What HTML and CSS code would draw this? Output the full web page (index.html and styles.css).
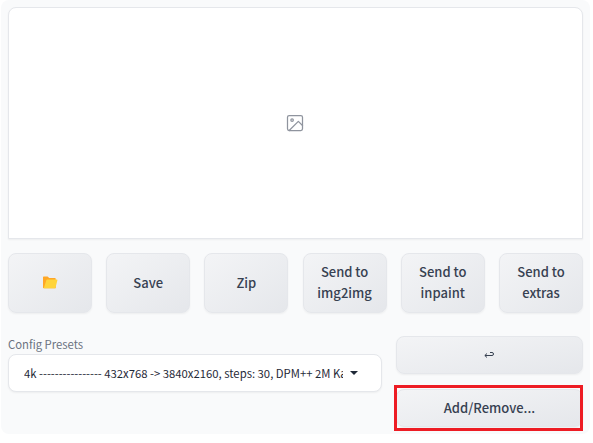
FILE: index.html
```html
<!DOCTYPE html>
<html lang="en">
<head>
    <meta charset="UTF-8">
    <meta name="viewport" content="width=device-width, initial-scale=1.0">
    <title>Config Presets</title>
    <link rel="stylesheet" href="styles.css">
</head>
<body>
<div class="panel">
    <div class="gallery">
        <svg class="image-icon" viewBox="0 0 24 24" fill="none" stroke="currentColor" stroke-width="1.5" stroke-linecap="round" stroke-linejoin="round">
            <rect x="3" y="3" width="18" height="18" rx="2" ry="2"/>
            <circle cx="8.5" cy="8.5" r="1.5"/>
            <polyline points="21 15 16 10 5 21"/>
        </svg>
    </div>

    <div class="actions">
        <button class="btn">
            <svg class="folder-icon" viewBox="0 0 15 13">
                <path d="M0 1.2Q0 .5.7.5H4.6L6.2 2H12Q12.7 2 12.7 2.8V12.2H.7Q0 12.2 0 11.5Z" fill="#ffa726"/>
                <path d="M3.3 4.2Q3.5 3.6 4.1 3.6H13.9Q14.6 3.6 14.4 4.3L12.6 11.6Q12.4 12.2 11.8 12.2H.8Z" fill="#ffd43b"/>
            </svg>
        </button>
        <button class="btn">Save</button>
        <button class="btn">Zip</button>
        <button class="btn">Send to<br>img2img</button>
        <button class="btn">Send to<br>inpaint</button>
        <button class="btn">Send to<br>extras</button>
    </div>

    <div class="presets">
        <div class="field">
            <div class="label">Config Presets</div>
            <div class="select">
                <span class="value">4k ---------------- 432x768 -&gt; 3840x2160, steps: 30, DPM++ 2M Kar</span>
                <svg class="arrow" viewBox="0 0 8 4"><path d="M0 0H8L4 4Z" fill="#1f2937"/></svg>
            </div>
        </div>
        <div class="side">
            <button class="btn">
                <svg class="return-icon" viewBox="0 0 10 6" fill="none" stroke="#374151" stroke-width="1">
                    <path d="M3 1.5L.8 3.5L3 5.5M1 3.5H8Q9.5 3.5 9.5 2T8 .5H6"/>
                </svg>
            </button>
            <div class="marked">
                <button class="btn">Add/Remove...</button>
            </div>
        </div>
    </div>
</div>
</body>
</html>
```
FILE: styles.css
```css
* {
    margin: 0;
    padding: 0;
    box-sizing: border-box;
    font-family: "Noto Sans CJK SC", "Noto Sans", sans-serif;
}

body {
    background-color: white;
}

.panel {
    width: 589px;
    height: 434px;
    margin-left: 1px;
    padding: 7px 7px 0;
    background-color: #f9fafb;
    border-radius: 8px;
}

.gallery {
    display: flex;
    justify-content: center;
    align-items: center;
    height: 232px;
    padding-right: 1px;
    background-color: white;
    border: 1px solid #e5e7eb;
    border-radius: 8px 8px 0 0;
    box-shadow: 0 1px 2px rgba(0, 0, 0, 0.05);
}

.image-icon {
    width: 20px;
    height: 20px;
    color: #8f949e;
}

.actions {
    display: grid;
    grid-template-columns: repeat(6, 1fr);
    gap: 14.2px;
    margin-top: 14px;
}

.actions .btn {
    height: 60px;
}

.btn {
    display: flex;
    justify-content: center;
    align-items: center;
    padding-bottom: 2px;
    border: 1px solid #e5e7eb;
    border-radius: 8px;
    background: linear-gradient(to bottom right, #f3f4f6, #e5e7eb);
    box-shadow: 0 1px 2px rgba(0, 0, 0, 0.05);
    color: #374151;
    font-size: 13px;
    font-weight: 500;
    line-height: 21px;
    text-align: center;
}

.folder-icon {
    width: 15px;
    height: 13px;
}

.presets {
    display: flex;
    gap: 14px;
    margin-top: 23px;
}

.field {
    width: 374px;
}

.label {
    height: 18px;
    color: #6b7280;
    font-size: 11.3px;
    line-height: 17px;
}

.select {
    display: flex;
    align-items: center;
    height: 38px;
    padding-left: 15px;
    background-color: white;
    border: 1px solid #e5e7eb;
    border-radius: 8px;
    box-shadow: 0 1px 2px rgba(0, 0, 0, 0.05);
}

.value {
    width: 319px;
    overflow: hidden;
    white-space: nowrap;
    color: #1f2937;
    font-size: 11.3px;
    line-height: 20px;
}

.arrow {
    width: 8px;
    height: 4px;
    margin-left: 7px;
}

.side {
    flex: 1;
}

.side .btn {
    width: 187px;
    height: 38px;
}

.return-icon {
    width: 10px;
    height: 6px;
    margin: 2px 2px 0 0;
}

.marked {
    position: relative;
    margin-top: 15px;
}

.marked::after {
    content: "";
    position: absolute;
    top: -4px;
    left: -2px;
    box-sizing: border-box;
    width: 189px;
    height: 46px;
    border: 3px solid #ed1c24;
}
```
